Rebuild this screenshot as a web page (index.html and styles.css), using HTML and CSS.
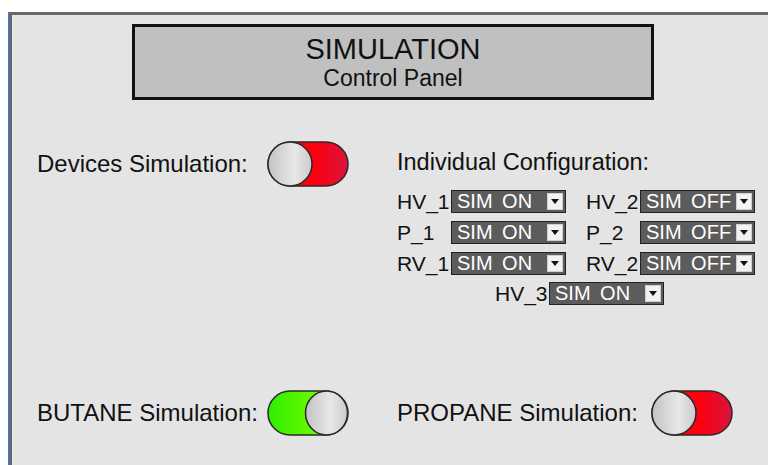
FILE: index.html
```html
<!DOCTYPE html>
<html lang="en">
<head>
    <meta charset="UTF-8">
    <meta name="viewport" content="width=device-width, initial-scale=1.0">
    <title>Simulation Control Panel</title>
    <link rel="stylesheet" href="styles.css">
</head>
<body>
    <div class="panel">
        <div class="title-box">
            <div class="title-main">SIMULATION</div>
            <div class="title-sub">Control Panel</div>
        </div>

        <div class="row top-row">
            <div class="sim-item">
                <span class="sim-label">Devices Simulation:</span>
                <svg class="toggle" viewBox="0 0 82 46" width="82" height="46">
                    <defs>
                        <linearGradient id="redFill1" x1="0" y1="0" x2="1" y2="0">
                            <stop offset="0" stop-color="#ff0000"/>
                            <stop offset="0.6" stop-color="#fc0010"/>
                            <stop offset="1" stop-color="#d8143c"/>
                        </linearGradient>
                        <linearGradient id="knob1" x1="0" y1="0" x2="1" y2="0">
                            <stop offset="0" stop-color="#c2c2c2"/>
                            <stop offset="0.6" stop-color="#e8e8e8"/>
                            <stop offset="1" stop-color="#cacaca"/>
                        </linearGradient>
                    </defs>
                    <rect x="1" y="1" width="80" height="44" rx="22" fill="url(#redFill1)" stroke="#2a2a2a" stroke-width="1.5"/>
                    <ellipse cx="23" cy="23" rx="22" ry="22" fill="url(#knob1)" stroke="#2a2a2a" stroke-width="1.5"/>
                </svg>
            </div>

            <div class="config">
                <div class="config-title">Individual Configuration:</div>
                <div class="config-grid">
                    <div class="cell"><span class="dev">HV_1</span><div class="dropdown"><span class="dd-text">SIM ON</span><span class="dd-btn"></span></div></div>
                    <div class="cell"><span class="dev">HV_2</span><div class="dropdown"><span class="dd-text">SIM OFF</span><span class="dd-btn"></span></div></div>
                    <div class="cell"><span class="dev">P_1</span><div class="dropdown"><span class="dd-text">SIM ON</span><span class="dd-btn"></span></div></div>
                    <div class="cell"><span class="dev">P_2</span><div class="dropdown"><span class="dd-text">SIM OFF</span><span class="dd-btn"></span></div></div>
                    <div class="cell"><span class="dev">RV_1</span><div class="dropdown"><span class="dd-text">SIM ON</span><span class="dd-btn"></span></div></div>
                    <div class="cell"><span class="dev">RV_2</span><div class="dropdown"><span class="dd-text">SIM OFF</span><span class="dd-btn"></span></div></div>
                </div>
                <div class="cell last-cell"><span class="dev">HV_3</span><div class="dropdown"><span class="dd-text">SIM ON</span><span class="dd-btn"></span></div></div>
            </div>
        </div>

        <div class="row bottom-row">
            <div class="sim-item">
                <span class="sim-label">BUTANE Simulation:</span>
                <svg class="toggle" viewBox="0 0 82 46" width="82" height="46">
                    <defs>
                        <linearGradient id="greenFill" x1="0" y1="0" x2="1" y2="0">
                            <stop offset="0" stop-color="#30ee00"/>
                            <stop offset="0.6" stop-color="#6cfa00"/>
                            <stop offset="1" stop-color="#8cff00"/>
                        </linearGradient>
                        <linearGradient id="knob2" x1="0" y1="0" x2="1" y2="0">
                            <stop offset="0" stop-color="#c2c2c2"/>
                            <stop offset="0.6" stop-color="#e8e8e8"/>
                            <stop offset="1" stop-color="#cacaca"/>
                        </linearGradient>
                    </defs>
                    <rect x="1" y="1" width="80" height="44" rx="22" fill="url(#greenFill)" stroke="#2a2a2a" stroke-width="1.5"/>
                    <ellipse cx="59.5" cy="23" rx="21" ry="22" fill="url(#knob2)" stroke="#2a2a2a" stroke-width="1.5"/>
                </svg>
            </div>

            <div class="sim-item">
                <span class="sim-label sim-label-wide">PROPANE Simulation:</span>
                <svg class="toggle" viewBox="0 0 82 46" width="82" height="46">
                    <defs>
                        <linearGradient id="redFill2" x1="0" y1="0" x2="1" y2="0">
                            <stop offset="0" stop-color="#ff0000"/>
                            <stop offset="0.6" stop-color="#fc0010"/>
                            <stop offset="1" stop-color="#d8143c"/>
                        </linearGradient>
                        <linearGradient id="knob3" x1="0" y1="0" x2="1" y2="0">
                            <stop offset="0" stop-color="#c2c2c2"/>
                            <stop offset="0.6" stop-color="#e8e8e8"/>
                            <stop offset="1" stop-color="#cacaca"/>
                        </linearGradient>
                    </defs>
                    <rect x="1" y="1" width="80" height="44" rx="22" fill="url(#redFill2)" stroke="#2a2a2a" stroke-width="1.5"/>
                    <ellipse cx="23" cy="23" rx="22" ry="22" fill="url(#knob3)" stroke="#2a2a2a" stroke-width="1.5"/>
                </svg>
            </div>
        </div>
    </div>
</body>
</html>
```

FILE: styles.css
```css
body {
    margin: 0;
    background-color: #ffffff;
    font-family: "Liberation Sans", Arial, sans-serif;
    color: #111;
}

.panel {
    margin: 12px 0 0 9px;
    min-height: calc(100vh - 12px);
    box-sizing: border-box;
    background-color: #e4e4e4;
    border-top: 3px solid #686868;
    border-left: 3px solid #686868;
    box-shadow: -1px 0 0 #2a80e4; /* thin blue edge on the left */
    display: flex;
    flex-direction: column;
    padding-bottom: 29px;
}

.title-box {
    margin: 9px 0 0 120px;
    width: 522px;
    height: 76px;
    box-sizing: border-box;
    background-color: #c0c0c0;
    border: 3px solid #111;
    text-align: center;
    padding-top: 6px;
}

.title-main {
    font-size: 29px;
    line-height: 32px;
}

.title-sub {
    font-size: 23px;
    line-height: 26px;
}

.row {
    display: grid;
    grid-template-columns: 360px 1fr;
    padding-left: 25px;
}

.top-row {
    margin-top: 41px;
    align-items: start;
}

.bottom-row {
    margin-top: auto;
}

.sim-item {
    display: flex;
    align-items: center;
}

.sim-label {
    width: 230px;
    font-size: 24px;
    line-height: 26px;
    white-space: nowrap;
}

.sim-label-wide {
    width: 254px;
}

.toggle {
    display: block;
}

.config-title {
    font-size: 23.5px;
    line-height: 26px;
    margin-top: 8px;
}

.config-grid {
    display: grid;
    grid-template-columns: 189px 170px;
    row-gap: 8px;
    margin-top: 15px;
}

.cell {
    display: flex;
    align-items: center;
}

.last-cell {
    margin: 7px 0 0 98px;
}

.dev {
    width: 54px;
    font-size: 21px;
    line-height: 23px;
}

.dropdown {
    width: 115px;
    height: 23px;
    box-sizing: border-box;
    background-color: #5c5c5c;
    border: 1px solid #222;
    display: flex;
    align-items: center;
    justify-content: space-between;
    padding: 0 2px 0 5px;
}

.dd-text {
    color: #ffffff;
    font-size: 20px;
    line-height: 21px;
    word-spacing: 4px;
    white-space: nowrap;
}

.dd-btn {
    width: 16px;
    height: 17px;
    box-sizing: border-box;
    background-color: #f2f2f2;
    border: 1px solid #d0d0d0;
    display: flex;
    align-items: center;
    justify-content: center;
}

.dd-btn::after {
    content: "";
    border-left: 4px solid transparent;
    border-right: 4px solid transparent;
    border-top: 5px solid #111;
}
```
